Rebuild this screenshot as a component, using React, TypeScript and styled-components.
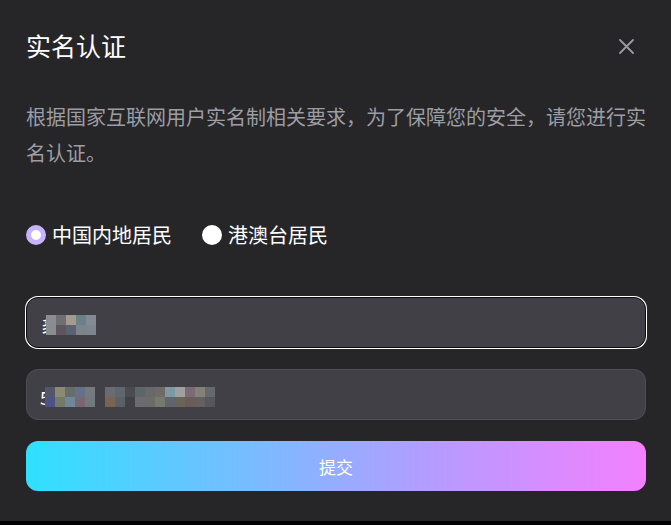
import React, { useState } from 'react';
import styled, { createGlobalStyle } from 'styled-components';

const GlobalStyle = createGlobalStyle`
  html, body {
    margin: 0;
    padding: 0;
    background: #000;
  }
  body {
    font-family: "Noto Sans CJK SC", "Noto Sans", sans-serif;
  }
`;

// Modal shell
const Modal = styled.div`
  width: 671px;
  height: 521px;
  box-sizing: border-box;
  background: #262629;
  padding: 26px 25px 0 26px;
  display: flex;
  flex-direction: column;
`;

const Header = styled.div`
  display: flex;
  justify-content: space-between;
  align-items: center;
  height: 38px;
`;

const Title = styled.h2`
  margin: 0;
  font-size: 25px;
  font-weight: 400;
  color: #ffffff;
  line-height: 38px;
`;

const CloseButton = styled.button`
  width: 24px;
  height: 24px;
  margin-right: 8px;
  margin-top: 3px;
  padding: 0;
  border: none;
  background: transparent;
  display: flex;
  align-items: center;
  justify-content: center;
  cursor: pointer;
`;

const Description = styled.p`
  margin: 35px 0 0;
  font-size: 20px;
  line-height: 36px;
  color: #9d9da4;
`;

const RadioGroup = styled.div`
  display: flex;
  align-items: center;
  gap: 30px;
  margin-top: 50px;
`;

const RadioLabel = styled.label`
  display: flex;
  align-items: center;
  gap: 6px;
  font-size: 20px;
  line-height: 28px;
  color: #ffffff;
  cursor: pointer;
`;

const RadioDot = styled.span<{ $checked: boolean }>`
  width: 20px;
  height: 20px;
  border-radius: 50%;
  box-sizing: border-box;
  background: #ffffff;
  border: ${(p) => (p.$checked ? '5px solid #c6b3fb' : 'none')};
  flex-shrink: 0;
`;

const Form = styled.div`
  display: flex;
  flex-direction: column;
  gap: 21px;
  margin-top: 48px;
`;

const Field = styled.div<{ $focused?: boolean }>`
  height: 51px;
  box-sizing: border-box;
  border-radius: 12px;
  background: #404046;
  border: 1px solid ${(p) => (p.$focused ? '#0c0c0e' : '#4f4f56')};
  box-shadow: ${(p) => (p.$focused ? '0 0 0 1px #ffffff' : 'none')};
  display: flex;
  align-items: center;
  padding: 4px 0 0 13px;
  font-size: 18px;
  color: #ffffff;
`;

const Lead = styled.span`
  line-height: 20px;
  white-space: nowrap;
`;

const Mosaic = styled.div<{ $cols: number; $offset: number }>`
  position: relative;
  display: grid;
  grid-template-columns: repeat(${(p) => p.$cols}, 10px);
  grid-auto-rows: 10px;
  margin-left: ${(p) => p.$offset}px;
`;

const Cell = styled.span`
  display: block;
`;

const SubmitButton = styled.button`
  height: 50px;
  border: none;
  border-radius: 12px;
  background: linear-gradient(90deg, #2fe0ff 0%, #80b8ff 40%, #b49cff 65%, #f480ff 100%);
  color: #ffffff;
  font-family: inherit;
  font-size: 17px;
  cursor: pointer;
`;

const CloseIcon = () => (
  <svg width="15" height="15" viewBox="0 0 15 15" fill="none">
    <path d="M1 1L14 14M14 1L1 14" stroke="#9a9aa0" strokeWidth="1.8" strokeLinecap="round" />
  </svg>
);

// Blurred personal data, kept as colour blocks
const nameBlocks = [
  ['#8a8d92', '#6f6e73', '#a39b8e', '#6b8188', '#838a93'],
  ['#8a8d90', '#5e5560', '#596372', '#7e8489', '#7d868f'],
];

const idBlocksA = [
  ['#55556a', '#8c8a73', '#666e6a', '#65708a', '#767a7e'],
  ['#4c5288', '#737a65', '#6f879a', '#7b6570', '#6f7a7f'],
];

const idBlocksB = [
  ['#6a6b70', '#5f6670', '#4a4b50', '#5e6468', '#68676a', '#6e6a66', '#7f99a3', '#a0a0a0', '#7b6c74', '#858078', '#666a70'],
  ['#7a6450', '#5a6068', '#404046', '#6c6c70', '#6e6a66', '#747a6c', '#60646c', '#6a6458', '#6c5c58', '#626060', '#55575a'],
];

const renderMosaic = (rows: string[][], offset: number) => (
  <Mosaic $cols={rows[0].length} $offset={offset}>
    {rows.flat().map((c, i) => (
      <Cell key={i} style={{ background: c }} />
    ))}
  </Mosaic>
);

const App: React.FC = () => {
  const [region, setRegion] = useState<'mainland' | 'hmt'>('mainland');

  return (
    <>
      <GlobalStyle />
      <Modal>
        <Header>
          <Title>实名认证</Title>
          <CloseButton aria-label="关闭">
            <CloseIcon />
          </CloseButton>
        </Header>

        <Description>
          根据国家互联网用户实名制相关要求，为了保障您的安全，请您进行实名认证。
        </Description>

        <RadioGroup>
          <RadioLabel onClick={() => setRegion('mainland')}>
            <RadioDot $checked={region === 'mainland'} />
            中国内地居民
          </RadioLabel>
          <RadioLabel onClick={() => setRegion('hmt')}>
            <RadioDot $checked={region === 'hmt'} />
            港澳台居民
          </RadioLabel>
        </RadioGroup>

        <Form>
          <Field $focused>
            <Lead>豸</Lead>
            {renderMosaic(nameBlocks, -12)}
          </Field>
          <Field>
            <Lead>5</Lead>
            {renderMosaic(idBlocksA, -5)}
            {renderMosaic(idBlocksB, 10)}
          </Field>
          <SubmitButton>提交</SubmitButton>
        </Form>
      </Modal>
    </>
  );
};

export default App;
